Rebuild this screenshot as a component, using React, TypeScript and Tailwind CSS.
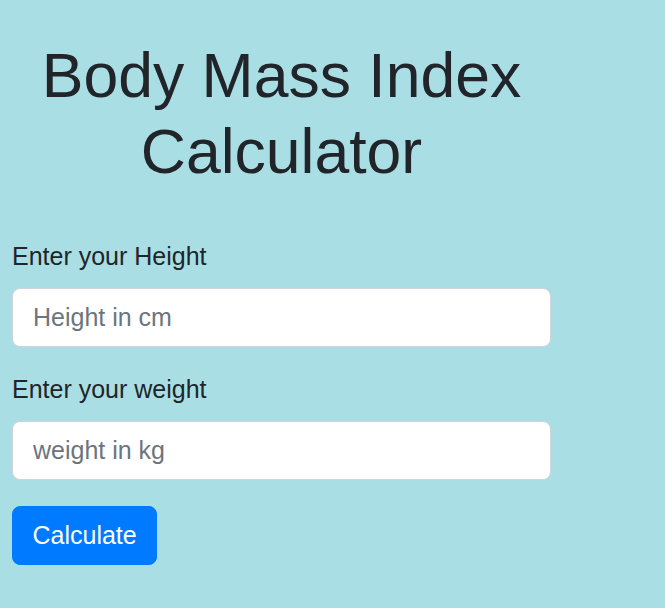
import React from "react";

const App = () => {
  return (
    <div className="min-h-screen w-full bg-[#aadee5] font-['Liberation_Sans',Arial,sans-serif] text-[#212529]">
      <div className="w-[563px] px-3 pt-[37px]">
        {/* Title */}
        <h1 className="text-center text-[62.5px] leading-[76px] font-normal">
          Body Mass Index
          <br />
          Calculator
        </h1>

        {/* Form */}
        <form className="mt-[49px] flex flex-col" onSubmit={(e) => e.preventDefault()}>
          <label className="text-[25px] leading-[37px] mb-[13px]">Enter your Height</label>
          <input
            type="number"
            placeholder="Height in cm"
            className="h-[59px] w-full rounded-[8px] border border-[#ced4da] bg-white px-5 text-[25px] text-[#495057] placeholder:text-[#6c757d] outline-none"
          />

          <label className="mt-[24px] text-[25px] leading-[37px] mb-[13px]">Enter your weight</label>
          <input
            type="number"
            placeholder="weight in kg"
            className="h-[59px] w-full rounded-[8px] border border-[#ced4da] bg-white px-5 text-[25px] text-[#495057] placeholder:text-[#6c757d] outline-none"
          />

          <div className="mt-[26px]">
            <button
              type="submit"
              className="h-[59px] rounded-[8px] border border-[#007bff] bg-[#007bff] px-[19.5px] text-[25px] text-white"
            >
              Calculate
            </button>
          </div>
        </form>
      </div>
    </div>
  );
};

export default App;
